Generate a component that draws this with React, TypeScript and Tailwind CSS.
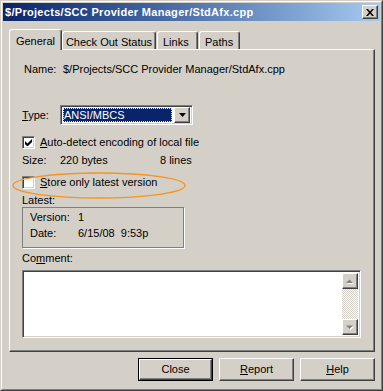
import React from 'react';

const raised =
  'border border-t-white border-l-white border-r-[#404040] border-b-[#404040] shadow-[inset_-1px_-1px_#808080]';
const sunken =
  'border border-t-[#808080] border-l-[#808080] border-r-white border-b-white shadow-[inset_1px_1px_#404040,inset_-1px_-1px_#d4d0c8]';

function Check({ checked }: { checked?: boolean }) {
  return (
    <div className={`w-[13px] h-[13px] bg-white flex items-center justify-center ${sunken}`}>
      {checked && (
        <svg width="7" height="7" viewBox="0 0 7 7">
          <path d="M0 2v3l2 2h1l4-4V0L2.5 4.5z" fill="#000" />
        </svg>
      )}
    </div>
  );
}

function Arrow({ up }: { up?: boolean }) {
  return (
    <div className={`w-[16px] h-[16px] bg-[#d4d0c8] flex items-center justify-center ${raised}`}>
      <svg width="8" height="5" viewBox="0 0 8 5" className="overflow-visible">
        {up ? (
          <>
            <path d="M4.5 1.5l3.5 3.5h-7z" fill="#fff" />
            <path d="M3.5 0.5l3.5 3.5h-7z" fill="#808080" />
          </>
        ) : (
          <>
            <path d="M1 1.5h7l-3.5 3.5z" fill="#fff" />
            <path d="M0 0.5h7l-3.5 3.5z" fill="#808080" />
          </>
        )}
      </svg>
    </div>
  );
}

function Btn({ children, def }: { children: React.ReactNode; def?: boolean }) {
  return (
    <div className={`w-[75px] h-[23px] ${def ? 'border border-black' : ''}`}>
      <div className={`w-full h-full flex items-center justify-center bg-[#d4d0c8] ${raised}`}>{children}</div>
    </div>
  );
}

export default function App() {
  return (
    <div
      className="relative w-[383px] h-[391px] bg-[#d4d0c8] border border-t-[#d4d0c8] border-l-[#d4d0c8] border-r-[#404040] border-b-[#404040] text-[11px] text-black"
      style={{ fontFamily: '"Liberation Sans", Arial, sans-serif' }}
    >
      <div className="w-full h-full border border-t-white border-l-white border-r-[#808080] border-b-[#808080] p-px">
        {/* title bar */}
        <div className="h-[18px] flex items-center bg-gradient-to-r from-[#0a246a] to-[#a6caf0] pl-[2px] pr-[2px]">
          <span className="flex-1 text-white font-bold text-[11px] tracking-[0.3px] leading-none">$/Projects/SCC Provider Manager/StdAfx.cpp</span>
          <div className={`w-[16px] h-[14px] bg-[#d4d0c8] flex items-center justify-center ${raised}`}>
            <svg width="8" height="7" viewBox="0 0 8 7">
              <path d="M0 0h2l2 2.5 2-2.5h2l-3 3.5 3 3.5h-2l-2-2.5-2 2.5h-2l3-3.5z" fill="#000" />
            </svg>
          </div>
        </div>

        {/* tabs */}
        <div className="mt-[8px] ml-[6px] h-[20px] flex items-end relative z-10">
          <div className="w-[53px] h-[21px] -mb-px bg-[#d4d0c8] border-t border-l border-t-white border-l-white border-r border-r-[#404040] shadow-[inset_-1px_0_#808080] rounded-t-[3px] flex items-start justify-center pt-[3px]">
            General
          </div>
          <div className="w-[94px] h-[18px] border-t border-l border-t-white border-l-white border-r border-r-[#404040] shadow-[inset_-1px_0_#808080] rounded-t-[3px] flex items-start justify-center pt-[2px]">
            Check Out Status
          </div>
          <div className="ml-px w-[41px] h-[18px] border-t border-l border-t-white border-l-white border-r border-r-[#404040] shadow-[inset_-1px_0_#808080] rounded-t-[3px] flex items-start pl-[5px] pt-[2px]">
            Links
          </div>
          <div className="ml-px w-[41px] h-[18px] border-t border-l border-t-white border-l-white border-r border-r-[#404040] shadow-[inset_-1px_0_#808080] rounded-t-[3px] flex items-start pl-[5px] pt-[2px]">
            Paths
          </div>
        </div>

        {/* panel */}
        <div className="ml-[6px] w-[366px] h-[303px] border border-t-white border-l-white border-r-[#404040] border-b-[#404040] shadow-[inset_-1px_-1px_#808080] pl-[12px]">
          <div className="mt-[12px] h-[15px] flex items-center pl-[2px]">
            <span className="w-[39px]">Name:</span>
            <span>$/Projects/SCC Provider Manager/StdAfx.cpp</span>
          </div>

          <div className="mt-[28px] h-[20px] flex items-center">
            <span className="w-[38px]">
              <u>T</u>ype:
            </span>
            <div className={`w-[133px] h-[20px] bg-white flex items-center pl-[2px] pr-[2px] ${sunken}`}>
              <div className="flex-1 h-[14px] bg-[#0a246a] text-white outline outline-1 outline-dotted outline-[#f0f0a0] -outline-offset-1 flex items-center pl-px leading-none">
                ANSI/MBCS
              </div>
              <div className={`ml-[2px] w-[16px] h-[16px] bg-[#d4d0c8] flex items-center justify-center ${raised}`}>
                <svg width="7" height="4" viewBox="0 0 7 4">
                  <path d="M0 0h7l-3.5 4z" fill="#000" />
                </svg>
              </div>
            </div>
          </div>

          <div className="mt-[10px] h-[15px] flex items-center">
            <Check checked />
            <span className="ml-[5px]">
              <u>A</u>uto-detect encoding of local file
            </span>
          </div>

          <div className="mt-[3px] h-[15px] flex items-center">
            <span className="w-[38px]">Size:</span>
            <span className="w-[100px]">220 bytes</span>
            <span>8 lines</span>
          </div>

          <div className="mt-[7px] h-[15px] flex items-center">
            <Check />
            <span className="ml-[5px]">
              <u>S</u>tore only latest version
            </span>
          </div>

          <div className="mt-[3px] h-[14px] flex items-center">Latest:</div>

          <div className="w-[162px] h-[41px] border border-[#808080] shadow-[1px_1px_0_#fff] pl-[7px] pt-[2px]">
            <div className="h-[15px] flex items-center">
              <span className="w-[48px]">Version:</span>
              <span>1</span>
            </div>
            <div className="mt-px h-[15px] flex items-center">
              <span className="w-[48px]">Date:</span>
              <span className="whitespace-pre">6/15/08  9:53p</span>
            </div>
          </div>

          <div className="mt-[3px] h-[15px] flex items-center">
            <span>
              Co<u>m</u>ment:
            </span>
          </div>

          <div className={`mt-[4px] w-[339px] h-[68px] bg-white flex justify-end p-[2px] ${sunken}`}>
            <div className="w-[16px] h-full flex flex-col">
              <Arrow up />
              <div className="flex-1 bg-[repeating-conic-gradient(#d4d0c8_0_25%,#ffffff_0_50%)] bg-[length:2px_2px]" />
              <Arrow />
            </div>
          </div>
        </div>

        {/* buttons */}
        <div className="mt-[6px] ml-[6px] w-[366px] flex justify-end gap-[6px]">
          <Btn def>Close</Btn>
          <Btn>
            <span>
              <u>R</u>eport
            </span>
          </Btn>
          <Btn>
            <span>
              <u>H</u>elp
            </span>
          </Btn>
        </div>
      </div>

      {/* orange annotation */}
      <svg className="absolute left-[10px] top-[170px] pointer-events-none" width="176" height="29" viewBox="0 0 176 29">
        <ellipse cx="88" cy="14.5" rx="86" ry="12.5" fill="none" stroke="#f7931e" strokeWidth="1.3" />
      </svg>
    </div>
  );
}
